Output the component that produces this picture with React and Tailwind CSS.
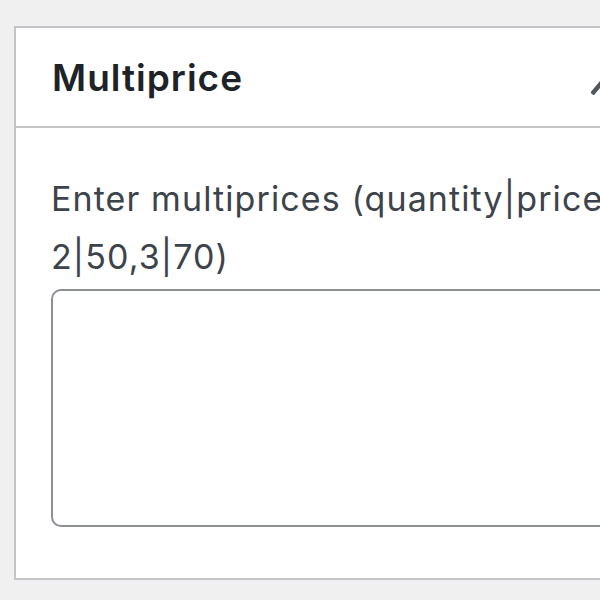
import React from 'react';

const MultipriceBox = () => {
  return (
    <div className="w-[640px] shrink-0 border-2 border-[#c3c4c7] bg-white">
      <div className="flex h-[100px] items-center justify-between border-b-2 border-[#c3c4c7] pl-[36px] pr-[37px]">
        <h2 className="text-[37px] font-semibold leading-none tracking-[1px] text-[#1d2327]">Multiprice</h2>
        <svg width="24" height="16" viewBox="0 0 24 16" className="mt-[20px]">
          <path d="M1 15 L12 2 L23 15" fill="none" stroke="#50575e" strokeWidth="4.5" />
        </svg>
      </div>
      <div className="pl-[35px] pr-[36px] pt-[42px] pb-[51px]">
        <label className="block whitespace-nowrap text-[34px] leading-[58px] tracking-[1.1px] text-[#3c434a]">
          Enter multiprices (quantity|price, e.g.
          <br />
          2|50,3|70)
        </label>
        <textarea className="mt-[3px] block h-[238px] w-full resize-none rounded-[10px] border-2 border-[#8c8f94] bg-white" />
      </div>
    </div>
  );
};

export default function App() {
  return (
    <div
      className="h-[600px] w-[600px] overflow-hidden bg-[#f0f0f1] pl-[14px] pt-[26px]"
      style={{ fontFamily: 'Inter, "Noto Sans", sans-serif' }}
    >
      <MultipriceBox />
    </div>
  );
}
